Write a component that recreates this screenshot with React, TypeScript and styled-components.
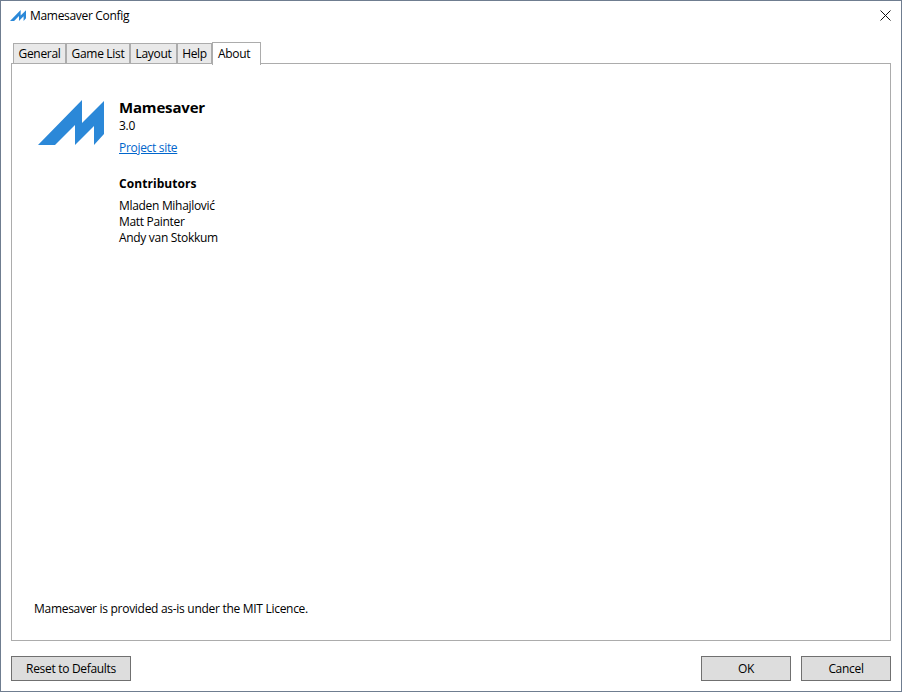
import React from "react";
import styled, { createGlobalStyle } from "styled-components";

const Global = createGlobalStyle`
  html, body { margin: 0; padding: 0; background: #fff; }
  #root { width: 902px; height: 692px; }
`;

const Win = styled.div`
  box-sizing: border-box;
  width: 902px;
  height: 692px;
  border: 1px solid #6f7d90;
  background: #fff;
  display: flex;
  flex-direction: column;
  font-family: "Open Sans", "Noto Sans", sans-serif;
  font-size: 12px;
  color: #000;
`;

const TitleBar = styled.div`
  box-sizing: border-box;
  height: 30px;
  display: flex;
  align-items: center;
  padding: 0 10px 2px 9px;
`;

const TitleText = styled.span`
  margin-left: 4px;
  letter-spacing: -0.31px;
`;

const Close = styled.svg`
  margin-left: auto;
  display: block;
`;

const Tabs = styled.div`
  height: 23px;
  margin-top: 10px;
  padding-left: 12px;
  display: flex;
  align-items: flex-end;
  position: relative;
  z-index: 1;
  margin-bottom: -1px;
`;

const Tab = styled.div<{ $w: number; $active?: boolean }>`
  box-sizing: border-box;
  width: ${(p) => p.$w}px;
  height: ${(p) => (p.$active ? 23 : 21)}px;
  margin-bottom: ${(p) => (p.$active ? -1 : 0)}px;
  border: 1px solid #acacac;
  border-bottom: ${(p) => (p.$active ? "none" : "1px solid #acacac")};
  background: ${(p) => (p.$active ? "#fff" : "#e9e9e9")};
  display: flex;
  align-items: center;
  justify-content: ${(p) => (p.$active ? "flex-start" : "center")};
  letter-spacing: -0.31px;
  padding-left: ${(p) => (p.$active ? 5 : 0)}px;
  padding-bottom: ${(p) => (p.$active ? 2 : 0)}px;
`;

const Panel = styled.div`
  box-sizing: border-box;
  width: 880px;
  height: 578px;
  margin-left: 10px;
  border: 1px solid #acacac;
  padding: 33px 0 0 26px;
  display: flex;
  flex-direction: column;
`;

const Head = styled.div`
  display: flex;
`;

const Logo = styled.svg`
  display: block;
  flex: none;
  margin: 3px 15px 0 0;
`;

const Info = styled.div`
  display: flex;
  flex-direction: column;
`;

const AppName = styled.div`
  font-size: 15px;
  font-weight: 700;
  line-height: 20px;
  letter-spacing: -0.17px;
`;

const Version = styled.div`
  line-height: 16px;
  margin-top: 1px;
  letter-spacing: -0.31px;
`;

const Link = styled.a`
  line-height: 16px;
  margin-top: 6px;
  color: #0066cc;
  text-decoration: underline;
  letter-spacing: -0.31px;
`;

const Heading = styled.div`
  font-weight: 700;
  font-size: 12px;
  line-height: 16px;
  margin-top: 20px;
  margin-bottom: 6px;
  letter-spacing: 0.06px;
`;

const Person = styled.div`
  line-height: 16px;
  letter-spacing: -0.31px;
`;

const Licence = styled.div`
  margin-top: auto;
  margin-bottom: 23px;
  margin-left: -4px;
  line-height: 16px;
  letter-spacing: -0.29px;
`;

const Footer = styled.div`
  display: flex;
  margin: 15px 0 0 10px;
  width: 880px;
  gap: 10px;
`;

const Btn = styled.div<{ $w: number; $push?: boolean }>`
  box-sizing: border-box;
  width: ${(p) => p.$w}px;
  height: 25px;
  border: 1px solid #707070;
  background: #dddddd;
  display: flex;
  align-items: center;
  justify-content: center;
  margin-left: ${(p) => (p.$push ? "auto" : "0")};
  letter-spacing: -0.31px;
`;

const MARK = "M0 45 L44 0 L44 23 L66 1 L66 34 L56 45 L56 26 L37 45 L37 25 L17 45 Z";

export default function App() {
  return (
    <Win>
      <Global />
      <TitleBar>
        <svg width="16" height="11" viewBox="0 0 66 45" aria-hidden="true">
          <path d={MARK} fill="#2b88d8" />
        </svg>
        <TitleText>Mamesaver Config</TitleText>
        <Close width="11" height="11" viewBox="0 0 11 11" aria-hidden="true">
          <path d="M0.5 0.5 L10.5 10.5 M10.5 0.5 L0.5 10.5" stroke="#111" strokeWidth="1" fill="none" />
        </Close>
      </TitleBar>
      <Tabs>
        <Tab $w={53}>General</Tab>
        <Tab $w={64}>Game List</Tab>
        <Tab $w={47}>Layout</Tab>
        <Tab $w={35}>Help</Tab>
        <Tab $w={49} $active>About</Tab>
      </Tabs>
      <Panel>
        <Head>
          <Logo width="66" height="45" viewBox="0 0 66 45" aria-hidden="true">
            <path d={MARK} fill="#2b88d8" />
          </Logo>
          <Info>
            <AppName>Mamesaver</AppName>
            <Version>3.0</Version>
            <Link>Project site</Link>
            <Heading>Contributors</Heading>
            <Person>Mladen Mihajlović</Person>
            <Person>Matt Painter</Person>
            <Person>Andy van Stokkum</Person>
          </Info>
        </Head>
        <Licence>Mamesaver is provided as-is under the MIT Licence.</Licence>
      </Panel>
      <Footer>
        <Btn $w={120}>Reset to Defaults</Btn>
        <Btn $w={90} $push>OK</Btn>
        <Btn $w={90}>Cancel</Btn>
      </Footer>
    </Win>
  );
}
